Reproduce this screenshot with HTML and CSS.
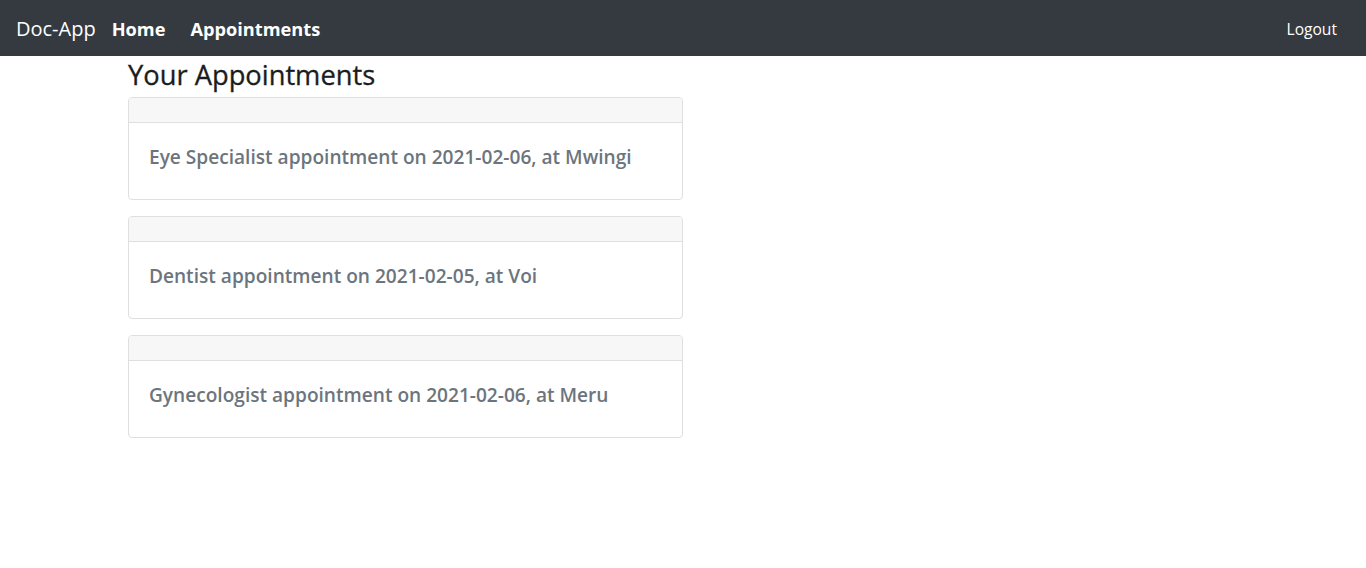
FILE: index.html
```html
<!DOCTYPE html>
<html lang="en">
<head>
<meta charset="utf-8">
<title>Doc-App</title>
<link rel="stylesheet" href="styles.css">
</head>
<body>
<nav class="navbar">
  <a class="brand" href="#">Doc-App</a>
  <ul class="nav-links">
    <li><a class="nav-link" href="#">Home</a></li>
    <li><a class="nav-link" href="#">Appointments</a></li>
  </ul>
  <a class="logout" href="#">Logout</a>
</nav>
<main class="container">
  <h3 class="page-title">Your Appointments</h3>
  <div class="list">
    <div class="card">
      <div class="card-header"></div>
      <div class="card-body"><h5 class="card-text">Eye Specialist appointment on 2021-02-06, at Mwingi</h5></div>
    </div>
    <div class="card">
      <div class="card-header"></div>
      <div class="card-body"><h5 class="card-text">Dentist appointment on 2021-02-05, at Voi</h5></div>
    </div>
    <div class="card">
      <div class="card-header"></div>
      <div class="card-body"><h5 class="card-text">Gynecologist appointment on 2021-02-06, at Meru</h5></div>
    </div>
  </div>
</main>
</body>
</html>
```
FILE: styles.css
```css
* { box-sizing: border-box; }
body {
  margin: 0;
  font-family: "Open Sans", "Noto Sans", sans-serif;
  color: #212529;
  background: #fff;
}
a { text-decoration: none; }
.navbar {
  height: 56px;
  background: #343a40;
  display: flex;
  align-items: center;
  padding: 1px 29px 0 16px;
}
.brand {
  color: #fff;
  font-size: 20px;
  margin-right: 16px;
}
.nav-links {
  list-style: none;
  display: flex;
  gap: 25px;
  margin: 0;
  padding: 0;
  flex: 1;
}
.nav-link {
  color: #fff;
  font-weight: 700;
  font-size: 18.2px;
}
.logout {
  color: #fff;
  font-size: 15.6px;
}
.container {
  width: 1140px;
  margin: 0 auto;
  padding: 0 15px;
}
.page-title {
  font-size: 27.3px;
  font-weight: 500;
  line-height: 33px;
  margin: 2px 0 6px;
  color: #1a1d20;
  -webkit-text-stroke: 0.3px #1a1d20;
}
.list {
  width: 555px;
  display: flex;
  flex-direction: column;
  gap: 16px;
}
.card {
  border: 1px solid #dfdfdf;
  border-radius: 4px;
  overflow: hidden;
}
.card-header {
  height: 25px;
  background: #f7f7f7;
  border-bottom: 1px solid #dfdfdf;
}
.card-body {
  height: 76px;
  padding: 0 20px 8px;
  display: flex;
  align-items: center;
}
.card-text {
  margin: 0;
  font-size: 19.1px;
  font-weight: 600;
  color: #6c757d;
}
```
